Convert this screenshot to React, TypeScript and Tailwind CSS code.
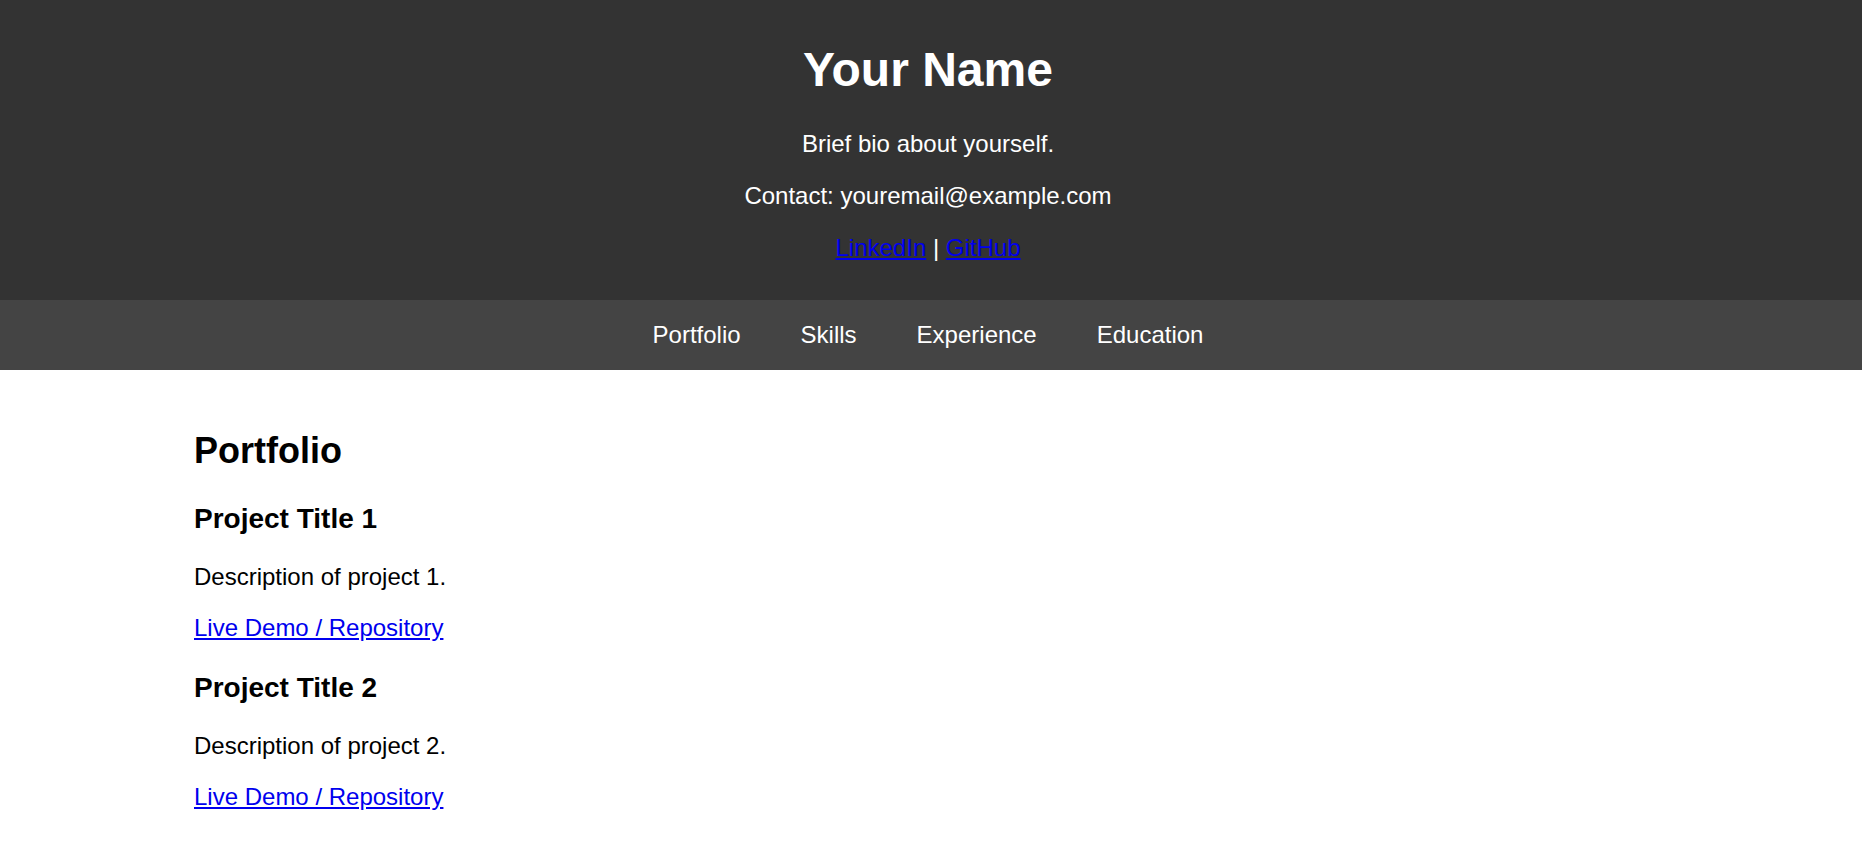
import React from "react";

export default function App() {
  const font = { fontFamily: '"Liberation Sans", Arial, Helvetica, sans-serif' };
  return (
    <div className="bg-white text-black" style={font}>
      <header className="bg-[#333333] text-white flex flex-col items-center pt-[42px] pb-[38px] pr-[6px] text-center">
        <h1 className="text-[48px] font-bold leading-[55px]">Your Name</h1>
        <p className="mt-[33px] text-[24px] leading-[28px]">Brief bio about yourself.</p>
        <p className="mt-[24px] text-[24px] leading-[28px]">Contact: youremail@example.com</p>
        <p className="mt-[24px] text-[24px] leading-[28px]">
          <a href="#" className="text-[#0000ee] underline">LinkedIn</a> |{" "}
          <a href="#" className="text-[#0000ee] underline">GitHub</a>
        </p>
      </header>
      <nav className="bg-[#444444] flex justify-center gap-[60px] py-[21px] pr-[6px]">
        {["Portfolio", "Skills", "Experience", "Education"].map((n) => (
          <a key={n} href="#" className="text-white text-[24px] leading-[28px] no-underline">
            {n}
          </a>
        ))}
      </nav>
      <main className="pl-[194px] pt-[60px] pb-[20px] flex flex-col items-start">
        <h2 className="text-[36px] font-bold leading-[41px]">Portfolio</h2>
        <h3 className="mt-[32px] text-[28px] font-bold leading-[32px]">Project Title 1</h3>
        <p className="mt-[28px] text-[24px] leading-[28px]">Description of project 1.</p>
        <a href="#" className="mt-[23px] text-[24px] leading-[28px] text-[#0000ee] underline">
          Live Demo / Repository
        </a>
        <h3 className="mt-[30px] text-[28px] font-bold leading-[32px]">Project Title 2</h3>
        <p className="mt-[28px] text-[24px] leading-[28px]">Description of project 2.</p>
        <a href="#" className="mt-[23px] text-[24px] leading-[28px] text-[#0000ee] underline">
          Live Demo / Repository
        </a>
      </main>
    </div>
  );
}
